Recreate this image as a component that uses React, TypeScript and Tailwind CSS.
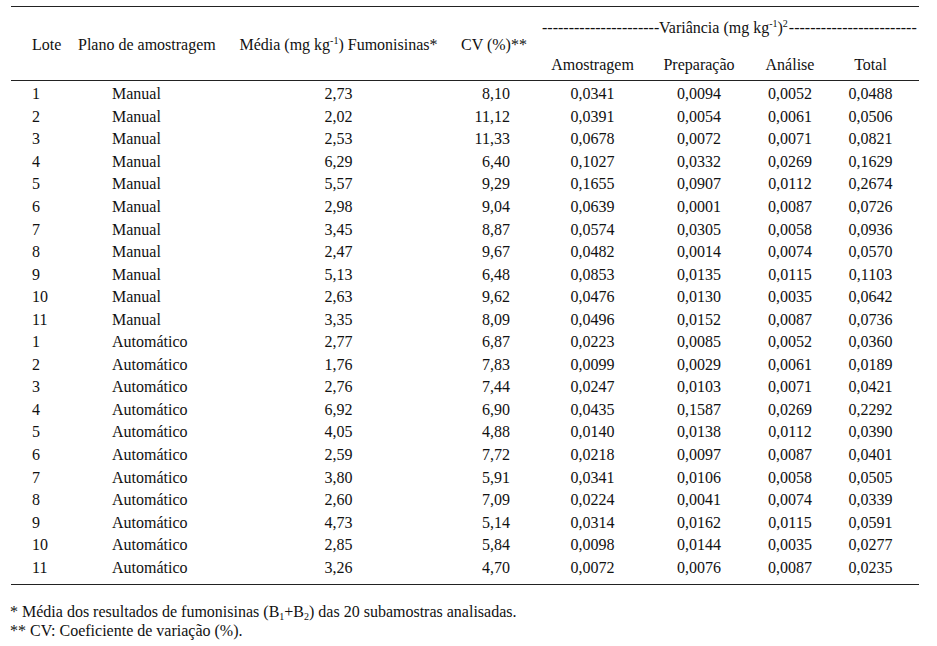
import React from "react";

const rows: [string, string, string, string, string, string, string, string][] = [
  ["1", "Manual", "2,73", "8,10", "0,0341", "0,0094", "0,0052", "0,0488"],
  ["2", "Manual", "2,02", "11,12", "0,0391", "0,0054", "0,0061", "0,0506"],
  ["3", "Manual", "2,53", "11,33", "0,0678", "0,0072", "0,0071", "0,0821"],
  ["4", "Manual", "6,29", "6,40", "0,1027", "0,0332", "0,0269", "0,1629"],
  ["5", "Manual", "5,57", "9,29", "0,1655", "0,0907", "0,0112", "0,2674"],
  ["6", "Manual", "2,98", "9,04", "0,0639", "0,0001", "0,0087", "0,0726"],
  ["7", "Manual", "3,45", "8,87", "0,0574", "0,0305", "0,0058", "0,0936"],
  ["8", "Manual", "2,47", "9,67", "0,0482", "0,0014", "0,0074", "0,0570"],
  ["9", "Manual", "5,13", "6,48", "0,0853", "0,0135", "0,0115", "0,1103"],
  ["10", "Manual", "2,63", "9,62", "0,0476", "0,0130", "0,0035", "0,0642"],
  ["11", "Manual", "3,35", "8,09", "0,0496", "0,0152", "0,0087", "0,0736"],
  ["1", "Automático", "2,77", "6,87", "0,0223", "0,0085", "0,0052", "0,0360"],
  ["2", "Automático", "1,76", "7,83", "0,0099", "0,0029", "0,0061", "0,0189"],
  ["3", "Automático", "2,76", "7,44", "0,0247", "0,0103", "0,0071", "0,0421"],
  ["4", "Automático", "6,92", "6,90", "0,0435", "0,1587", "0,0269", "0,2292"],
  ["5", "Automático", "4,05", "4,88", "0,0140", "0,0138", "0,0112", "0,0390"],
  ["6", "Automático", "2,59", "7,72", "0,0218", "0,0097", "0,0087", "0,0401"],
  ["7", "Automático", "3,80", "5,91", "0,0341", "0,0106", "0,0058", "0,0505"],
  ["8", "Automático", "2,60", "7,09", "0,0224", "0,0041", "0,0074", "0,0339"],
  ["9", "Automático", "4,73", "5,14", "0,0314", "0,0162", "0,0115", "0,0591"],
  ["10", "Automático", "2,85", "5,84", "0,0098", "0,0144", "0,0035", "0,0277"],
  ["11", "Automático", "3,26", "4,70", "0,0072", "0,0076", "0,0087", "0,0235"],
];

function Sup({ children }: { children: React.ReactNode }) {
  return <span className="text-[10px] relative -top-[6px]">{children}</span>;
}
function Sub({ children }: { children: React.ReactNode }) {
  return <span className="text-[10px] relative top-[3px] leading-none">{children}</span>;
}

export default function App() {
  return (
    <div className="w-[937px] h-[646px] bg-white text-[#111] overflow-hidden font-['Liberation_Serif','Times_New_Roman',serif]">
      <div className="pt-[6px] pl-[11px]">
        <div className="w-[908px] text-[16px] leading-none">
          <div className="border-t-[1.5px] border-[#222]" />
          {/* Header */}
          <div className="flex h-[74px] border-b-[1.5px] border-[#222]">
            <div className="w-[59px] pl-[21px] pt-[3px] flex items-center">Lote</div>
            <div className="w-[170px] pl-[8px] pt-[3px] flex items-center whitespace-nowrap">Plano de amostragem</div>
            <div className="w-[197px] pt-[3px] flex items-center justify-center whitespace-nowrap">
              <span>
                Média (mg kg<Sup>-1</Sup>) Fumonisinas*
              </span>
            </div>
            <div className="w-[108px] pl-[24px] pt-[3px] flex items-center whitespace-nowrap">CV (%)**</div>
            <div className="flex-1 flex flex-col">
              <div className="h-[42px] flex items-center">
                <div className="w-[117px] -ml-[3px] whitespace-nowrap">----------------------</div>
                <span className="whitespace-nowrap">
                  Variância (mg kg<Sup>-1</Sup>)<Sup>2</Sup>
                </span>
                <div className="whitespace-nowrap pl-[1px]">------------------------</div>
              </div>
              <div className="flex-1 flex items-center">
                <div className="w-[95px] text-center">Amostragem</div>
                <div className="w-[118px] text-center">Preparação</div>
                <div className="w-[64px] text-center">Análise</div>
                <div className="w-[97px] text-center">Total</div>
              </div>
            </div>
          </div>
          {/* Body */}
          <div className="pt-[2px] pb-[5px] border-b-[1.5px] border-[#222]">
            {rows.map((r, i) => (
              <div key={i} className="flex h-[22.55px] items-center">
                <div className="w-[59px] pl-[21px]">{r[0]}</div>
                <div className="w-[170px] pl-[42px]">{r[1]}</div>
                <div className="w-[197px] text-center">{r[2]}</div>
                <div className="w-[108px] text-right pr-[35px]">{r[3]}</div>
                <div className="w-[95px] text-center">{r[4]}</div>
                <div className="w-[118px] text-center">{r[5]}</div>
                <div className="w-[64px] text-center">{r[6]}</div>
                <div className="w-[97px] text-center">{r[7]}</div>
              </div>
            ))}
          </div>
          {/* Footnotes */}
          <div className="pt-[17px] text-[16px] leading-[19px] -ml-[1px]">
            <div>
              * Média dos resultados de fumonisinas (B<Sub>1</Sub>+B<Sub>2</Sub>) das 20 subamostras analisadas.
            </div>
            <div>** CV: Coeficiente de variação (%).</div>
          </div>
        </div>
      </div>
    </div>
  );
}
